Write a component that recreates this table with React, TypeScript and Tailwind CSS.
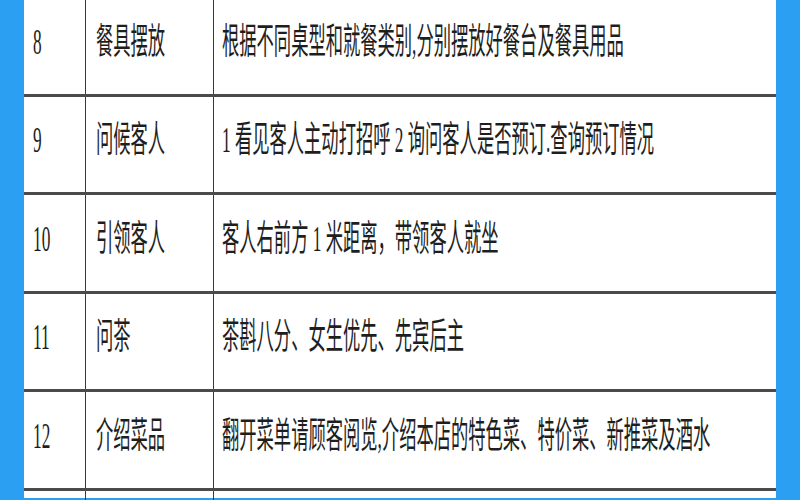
import React from 'react';

const rows = [
  { id: 'r8', no: '8', step: '餐具摆放', desc: '根据不同桌型和就餐类别,分别摆放好餐台及餐具用品' },
  { id: 'r9', no: '9', step: '问候客人', desc: '1 看见客人主动打招呼 2 询问客人是否预订.查询预订情况' },
  { id: 'r10', no: '10', step: '引领客人', desc: '客人右前方 1 米距离，带领客人就坐' },
  { id: 'r11', no: '11', step: '问茶', desc: '茶斟八分、女生优先、先宾后主' },
  { id: 'r12', no: '12', step: '介绍菜品', desc: '翻开菜单请顾客阅览,介绍本店的特色菜、特价菜、新推菜及酒水' },
  { id: 'r13', no: '', step: '', desc: '' },
];

const Stretched: React.FC<{ children: React.ReactNode }> = ({ children }) => (
  <span className="inline-block origin-center scale-y-[2.12] whitespace-nowrap">{children}</span>
);

export default function App() {
  return (
    <div
      className="w-[800px] h-[500px] overflow-hidden bg-[#2ba0f3] px-[24px] text-[17.3px] leading-none text-[#1e1e1e]"
      style={{ fontFamily: '"Liberation Serif", "Noto Sans CJK SC", serif' }}
    >
      <div className="h-full bg-white flex flex-col mt-[-2px]">
        {rows.map((row) => (
          <div key={row.id} className="flex h-[98.5px] shrink-0 border-b-[3px] border-[#4b4b4b]">
            <div className="w-[62px] shrink-0 border-r border-[#3a3a3a] flex items-center pl-[9px] pb-[7px]">
              <Stretched>{row.no}</Stretched>
            </div>
            <div className="w-[128px] shrink-0 border-r border-[#3a3a3a] flex items-center pl-[10px] pb-[7px]">
              <Stretched>{row.step}</Stretched>
            </div>
            <div className="flex-1 flex items-center pl-[8px] pb-[7px]">
              <Stretched>{row.desc}</Stretched>
            </div>
          </div>
        ))}
      </div>
    </div>
  );
}
